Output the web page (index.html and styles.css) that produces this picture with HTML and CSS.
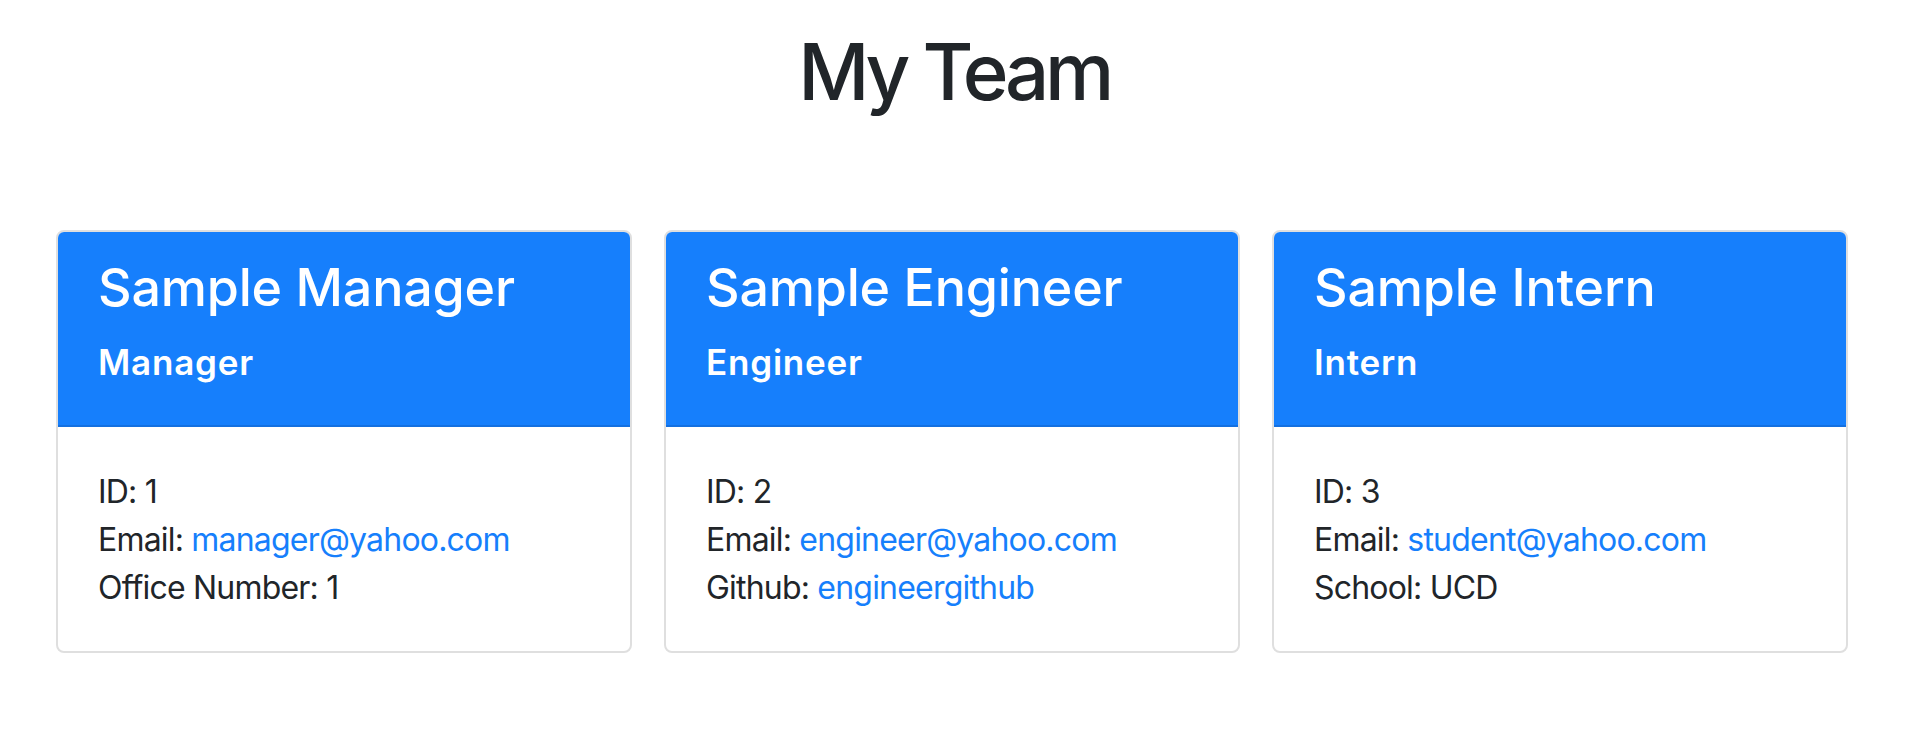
FILE: index.html
```html
<!DOCTYPE html>
<html lang="en">
<head>
<meta charset="utf-8">
<title>My Team</title>
<link rel="stylesheet" href="styles.css">
</head>
<body>
  <header class="page-header">
    <h1 class="page-title">My Team</h1>
  </header>
  <main class="team">
    <section class="card">
      <div class="card-header">
        <h2 class="card-name">Sample Manager</h2>
        <h3 class="card-role">Manager</h3>
      </div>
      <div class="card-body">
        <p class="line">ID: 1</p>
        <p class="line">Email: <a class="link" href="mailto:manager@yahoo.com">manager@yahoo.com</a></p>
        <p class="line">Office Number: 1</p>
      </div>
    </section>
    <section class="card">
      <div class="card-header">
        <h2 class="card-name">Sample Engineer</h2>
        <h3 class="card-role">Engineer</h3>
      </div>
      <div class="card-body">
        <p class="line">ID: 2</p>
        <p class="line">Email: <a class="link" href="mailto:engineer@yahoo.com">engineer@yahoo.com</a></p>
        <p class="line">Github: <a class="link" href="#">engineergithub</a></p>
      </div>
    </section>
    <section class="card">
      <div class="card-header">
        <h2 class="card-name">Sample Intern</h2>
        <h3 class="card-role">Intern</h3>
      </div>
      <div class="card-body">
        <p class="line">ID: 3</p>
        <p class="line">Email: <a class="link" href="mailto:student@yahoo.com">student@yahoo.com</a></p>
        <p class="line">School: UCD</p>
      </div>
    </section>
  </main>
</body>
</html>
```
FILE: styles.css
```css
* { box-sizing: border-box; }

html, body {
  margin: 0;
  padding: 0;
  background: #ffffff;
}

body {
  font-family: Inter, "Noto Sans", "Liberation Sans", sans-serif;
  color: #212529;
  width: 1908px;
}

.page-header {
  padding-top: 25px;
  text-align: center;
}

.page-title {
  margin: 0;
  font-size: 78px;
  line-height: 93.6px;
  font-weight: 500;
  letter-spacing: -4.4px;
  color: #212529;
}

.team {
  display: flex;
  gap: 32px;
  padding: 0 60px 0 56px;
  margin-top: 111.4px;
}

.card {
  width: 576px;
  flex: 0 0 576px;
  border: 2px solid #dfdfdf;
  border-radius: 8px;
  overflow: hidden;
  background: #ffffff;
}

.card-header {
  background: #167ffc;
  border-bottom: 2px solid #1470e0;
  padding: 25.8px 40px 0 40px;
  color: #ffffff;
  height: 195px;
}

.card-name {
  margin: 0;
  font-size: 52px;
  line-height: 60px;
  font-weight: 500;
  letter-spacing: -0.2px;
}

.card-role {
  margin: 24.1px 0 0 0;
  font-size: 35px;
  line-height: 40.8px;
  font-weight: 600;
  letter-spacing: 0.8px;
}

.card-body {
  padding: 41.4px 40px 38.6px 40px;
}

.line {
  margin: 0;
  font-size: 32px;
  line-height: 48px;
  letter-spacing: -0.8px;
}

.link {
  color: #167ffc;
  text-decoration: none;
}
```
